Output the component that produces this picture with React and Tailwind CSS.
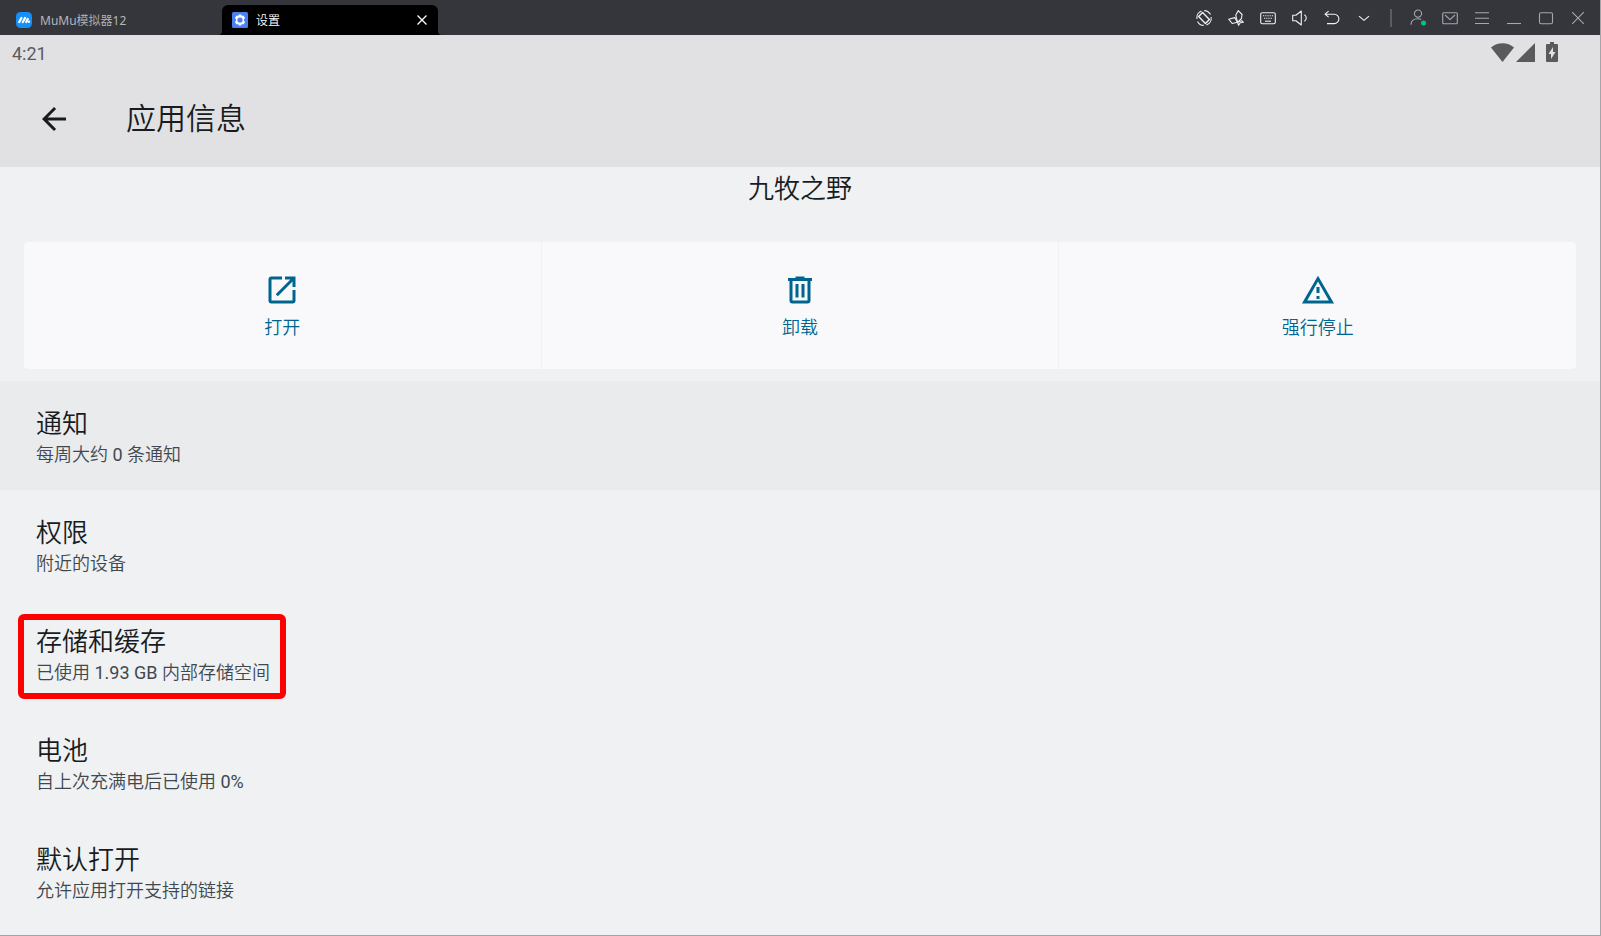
import React from 'react';

const toolIcons = [
  {
    label: '旋转',
    art: (
      <>
        <path d="M5.6 .9A7.4 7.4 0 0 0 .9 9M10.4 15.1A7.4 7.4 0 0 0 15.1 7M8.2 .6a7.4 7.4 0 0 1 6.3 4M7.8 15.4a7.4 7.4 0 0 1-6.3-4" />
        <path d="M2.6 6.6 6.6 2.6l6.8 6.8-4 4z" strokeWidth="1.4" />
      </>
    ),
  },
  {
    label: '多开',
    art: (
      <>
        <path d="m10.2 .7-2.5 4.5 1.8 7.1 4-3.8.6-4z" />
        <path d="m.7 9.2 6-1.6 2.8 4.7-5.3 1.2z" />
        <path d="m9.5 12.3 4.4-1.6 1.5 1.6-3.2.4-1.6 2.6z" />
      </>
    ),
  },
  {
    label: '键盘',
    art: (
      <>
        <rect x=".7" y="2.7" width="14.6" height="11" rx="1.5" />
        <path d="M3 5.8h10M4 8.2h8" strokeDasharray="1.2 1" />
        <path d="M5 11.2h6" />
      </>
    ),
  },
  {
    label: '音量',
    art: <path d="M.7 5.3v5.4h3.2L9.3 15V1L3.9 5.3zM12.3 4.7c2.6 1.2 2.6 5.4 0 6.6" />,
  },
  {
    label: '返回',
    art: <path d="M4.6 1.2 1 4.2l3.6 3M1 4.2h9.2a4.6 4.6 0 0 1 0 9.4H3" />,
  },
  { label: '更多', art: <path d="m3 6.2 5 4.2 5-4.2" /> },
];

const windowIcons = [
  {
    label: '账号',
    art: (
      <>
        <circle cx="8" cy="3.6" r="3.6" />
        <path d="M1 14.8c0-4 2.8-6 7-6 1.2 0 2.3.2 3.2.6" />
        <circle cx="13.5" cy="13" r="2.5" fill="#00c777" stroke="none" />
      </>
    ),
  },
  {
    label: '消息',
    art: (
      <>
        <rect x=".7" y="2.7" width="14.6" height="11" rx="1" />
        <path d="m3 5 5 4.6L13 5" />
      </>
    ),
  },
  { label: '菜单', art: <path d="M1 2.7h14M1 8.2h14M1 13.5h14" /> },
  { label: '最小化', art: <path d="M1 13.5h14" /> },
  { label: '最大化', art: <rect x="1.5" y="2.7" width="13" height="11" rx="1.5" /> },
  { label: '关闭', art: <path d="m2.2 2.2 11.6 11.6M13.8 2.2 2.2 13.8" /> },
];

const actions = [
  {
    label: '打开',
    art: (
      <path
        fillRule="evenodd"
        d="M12 3v2H5v14h14v-7h2v7a2 2 0 0 1-2 2H5a2 2 0 0 1-2-2V5a2 2 0 0 1 2-2zM14 3h7v7h-2V6.4l-9.8 9.8-1.4-1.4L17.6 5H14z"
      />
    ),
  },
  {
    label: '卸载',
    art: (
      <path
        fillRule="evenodd"
        d="M9 3h6v1h5v2h-1v13a2 2 0 0 1-2 2H7a2 2 0 0 1-2-2V6H4V4h5zM7 6v13h10V6zM9 8h2v9H9zM13 8h2v9h-2z"
      />
    ),
  },
  {
    label: '强行停止',
    art: (
      <path
        fillRule="evenodd"
        d="M12 2.5 22.7 21H1.3zM12 6.4 4.8 19h14.4zM11 10h2v4h-2zM11 16h2v2h-2z"
      />
    ),
  },
];

const settings = [
  { title: '通知', summary: '每周大约 0 条通知', active: true },
  { title: '权限', summary: '附近的设备' },
  { title: '存储和缓存', summary: '已使用 1.93 GB 内部存储空间', marked: true },
  { title: '电池', summary: '自上次充满电后已使用 0%' },
  { title: '默认打开', summary: '允许应用打开支持的链接' },
];

const BarButton = ({ label, children }) => (
  <button type="button" aria-label={label} className="w-8 h-full flex items-center justify-center">
    <svg width="16" height="16" viewBox="0 0 16 16" fill="none" stroke="currentColor" strokeWidth="1.1" strokeLinejoin="round" overflow="visible">
      {children}
    </svg>
  </button>
);

const TitleBar = () => (
  <div className="h-[35px] flex bg-[#35363c] text-xs font-['Noto_Sans','Noto_Sans_CJK_SC_DemiLight','Noto_Sans_CJK_SC',sans-serif]">
    <div className="w-[222px] pl-4 pt-[5px] flex items-center gap-2 text-[#b4b6ba]">
      <svg width="16" height="16" viewBox="0 0 16 16">
        <rect width="16" height="16" rx="4.5" fill="#1590fb" />
        <path d="M3.2 10 5.4 6M6.8 10 9 6M10.3 10l1.4-3" stroke="#fff" strokeWidth="2.3" strokeLinecap="round" />
        <circle cx="13" cy="9.8" r="1.2" fill="#fff" />
      </svg>
      <span className="pt-px">MuMu模拟器12</span>
    </div>

    {/* Active tab */}
    <div className="relative mt-[5px] w-[216px] pl-[10px] pr-[9px] flex items-center gap-2 rounded-t-md bg-black text-white">
      <svg className="absolute bottom-0 -left-1" width="4" height="4">
        <path d="M4 0v4H0a4 4 0 0 0 4-4" />
      </svg>
      <svg className="absolute bottom-0 -right-1" width="4" height="4">
        <path d="M0 0v4h4a4 4 0 0 1-4-4" />
      </svg>
      <svg width="16" height="16" viewBox="0 0 16 16">
        <rect width="16" height="16" rx="1.5" fill="#4a80f0" />
        <path
          fill="#fff"
          fillRule="evenodd"
          d="M6.7 2.4h2.6l.5 1.6 1.7-.4 1.6 2.3L12 7.3v1.4l1.1 1.4-1.6 2.3-1.7-.4-.5 1.6H6.7L6.2 12l-1.7.4-1.6-2.3L4 8.7V7.3L2.9 5.9l1.6-2.3 1.7.4zM8 5.4a2.6 2.6 0 1 0 0 5.2 2.6 2.6 0 0 0 0-5.2"
        />
      </svg>
      <span className="flex-1 pt-px">设置</span>
      <button type="button" aria-label="关闭标签">
        <svg width="14" height="14" viewBox="0 0 14 14" stroke="currentColor" strokeWidth="1.3">
          <path d="m2.5 2.5 9 9M11.5 2.5l-9 9" />
        </svg>
      </button>
    </div>

    <div className="ml-auto pr-[6px] flex items-center">
      <div className="h-full flex text-[#f0f0f1]">
        {toolIcons.map((icon) => (
          <BarButton key={icon.label} label={icon.label}>{icon.art}</BarButton>
        ))}
      </div>
      <div className="mx-[10px] w-0.5 h-[18px] bg-[#5a5c62]" />
      <div className="h-full flex text-[#a3a8b4]">
        {windowIcons.map((icon) => (
          <BarButton key={icon.label} label={icon.label}>{icon.art}</BarButton>
        ))}
      </div>
    </div>
  </div>
);

const StatusBar = () => (
  <div className="h-9 pl-3 pr-[42px] flex items-start justify-between text-[#5a5a5c]">
    <span className="pt-[3px] text-lg leading-8 font-[450]">4:21</span>
    <div className="pt-[7px] flex items-center">
      <svg width="23" height="20" viewBox="0 0 23 20" fill="currentColor">
        <path d="M11.5 20 0 5.6C6-.2 17-.2 23 5.6z" />
      </svg>
      <svg className="ml-0.5" width="19" height="20" viewBox="0 0 19 20" fill="currentColor">
        <path d="M19 1v19H0z" />
      </svg>
      <svg className="ml-[11px]" width="12" height="20" viewBox="0 0 12 20" fill="currentColor">
        <path fillRule="evenodd" d="M4 0h4v2h3a1 1 0 0 1 1 1v16a1 1 0 0 1-1 1H1a1 1 0 0 1-1-1V3a1 1 0 0 1 1-1h3zM7 5l-4.5 7H5v5l4.5-7H7z" />
      </svg>
    </div>
  </div>
);

export default function App() {
  return (
    <div className="min-h-screen flex flex-col bg-[#eff1f3] border-r border-b border-[#a4a5a8] text-[#191c1e] font-['Roboto','Noto_Sans_CJK_SC_DemiLight','Noto_Sans_CJK_SC',sans-serif]">
      <TitleBar />

      <header className="bg-[#e1e1e3]">
        <StatusBar />
        <div className="h-24 pl-9 flex items-center gap-[54px]">
          <button type="button" aria-label="返回">
            <svg width="36" height="36" viewBox="0 0 24 24" fill="currentColor">
              <path d="M20 11H7.8l5.6-5.6L12 4l-8 8 8 8 1.4-1.4L7.8 13H20z" />
            </svg>
          </button>
          <h1 className="text-[30px] leading-10 font-[350]">应用信息</h1>
        </div>
      </header>

      <main>
        <h2 className="pt-[5px] pb-[35px] text-center text-[26px] leading-[35px] font-[350]">九牧之野</h2>

        <div className="mx-6 mb-3 grid grid-cols-3 gap-px rounded overflow-hidden">
          {actions.map((action) => (
            <button
              key={action.label}
              type="button"
              className="h-[127px] pt-[30px] flex flex-col items-center gap-1 bg-[#f9f9fc] text-[#00658e]"
            >
              <svg width="36" height="36" viewBox="0 0 24 24" fill="currentColor">{action.art}</svg>
              <span className="text-lg leading-8 font-[350]">{action.label}</span>
            </button>
          ))}
        </div>

        <ul>
          {settings.map((item) => (
            <li key={item.title} className={item.active ? 'relative bg-[#eaebed]' : 'relative'}>
              <button type="button" className="w-full h-[109px] pl-9 pt-[26px] flex flex-col items-start text-left">
                <span className="text-[26px] leading-[35px] font-[350]">{item.title}</span>
                <span className="text-lg leading-[26px] text-[#41484d]">{item.summary}</span>
              </button>
              {item.marked && (
                <div className="absolute left-[18px] top-[15px] w-[268px] h-[85px] border-6 border-[#ff0000] rounded-md pointer-events-none" />
              )}
            </li>
          ))}
        </ul>
      </main>
    </div>
  );
}
